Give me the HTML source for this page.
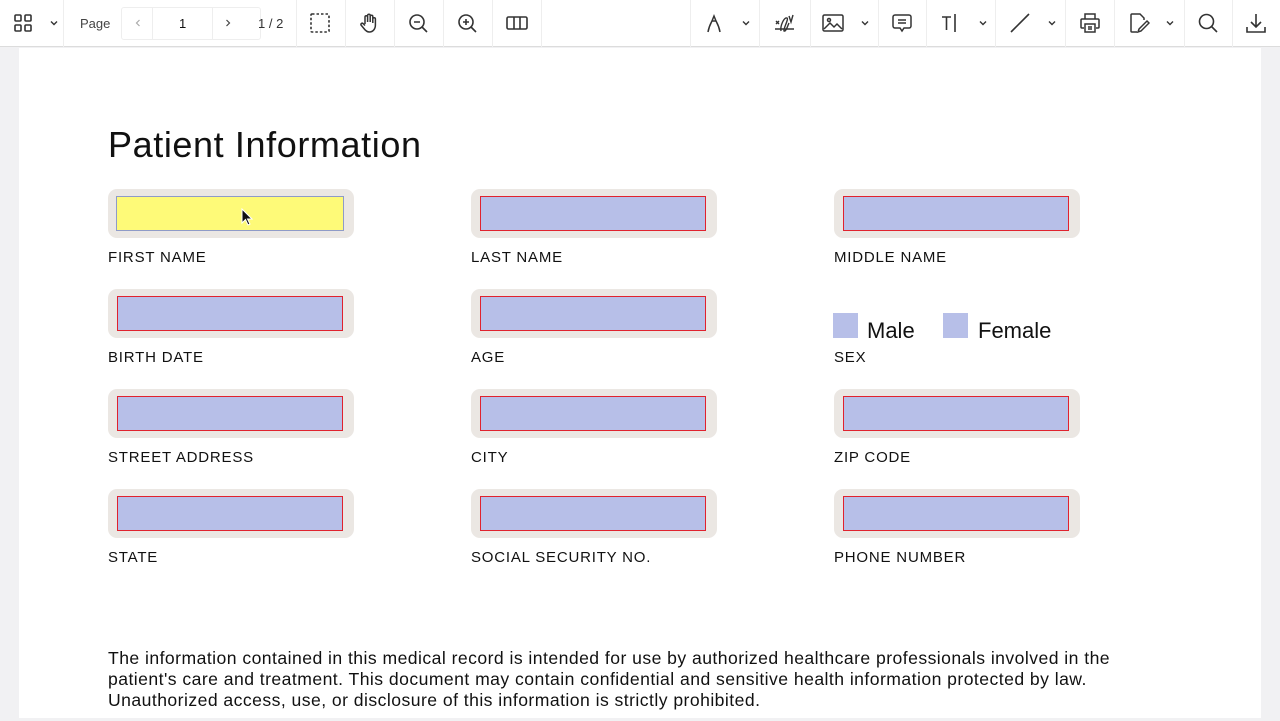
<!DOCTYPE html>
<html><head><meta charset="utf-8"><style>
*{margin:0;padding:0;box-sizing:border-box}
body{width:1280px;height:721px;overflow:hidden;background:#f1f1f3;font-family:"Liberation Sans",sans-serif;position:relative;color:#111}
.tb{position:absolute;left:0;top:0;width:1280px;height:47px;background:#fff;border-bottom:1px solid #dcdcdc}
.sep{position:absolute;top:0;width:1px;height:47px;background:#eee}
.ic{position:absolute;top:12px;width:22px;height:22px}
.ch{position:absolute;top:19px;width:8px;height:8px}
.page{position:absolute;left:19px;top:48px;width:1242px;height:670px;background:#fff}
h1{position:absolute;left:108px;top:124px;font-size:36px;font-weight:400;letter-spacing:0.6px}
.f{position:absolute;width:246px;height:49px;background:#ebe7e3;border-radius:9px}
.f i{position:absolute;left:9px;top:7px;width:226px;height:35px;background:#b7bfe8;border:1px solid #e0222e}
.l{position:absolute;font-size:15px;letter-spacing:0.8px}
.cb{position:absolute;width:25px;height:25px;background:#b7bfe8}
.t{position:absolute;font-size:22px}
p{position:absolute;left:108px;top:648px;font-size:17.6px;line-height:21px;white-space:nowrap;letter-spacing:0.45px}
</style></head><body>
<div class="tb">
<svg class="ic" style="left:12px" viewBox="0 0 22 22" fill="none" stroke="#333" stroke-width="1.6"><rect x="3" y="3" width="6" height="6" rx="1"/><rect x="13" y="3" width="6" height="6" rx="1"/><rect x="3" y="13" width="6" height="6" rx="1"/><rect x="13" y="13" width="6" height="6" rx="1"/></svg>
<svg class="ch" style="left:50px" viewBox="0 0 8 8" fill="none" stroke="#333" stroke-width="1.4"><path d="M1 2.5l3 3 3-3"/></svg>
<div class="sep" style="left:63px"></div>
<div style="position:absolute;left:80px;top:16px;font-size:13px;color:#444">Page</div>
<div style="position:absolute;left:121px;top:7px;width:140px;height:33px;border:1px solid #eee;border-radius:3px"></div>
<div class="sep" style="left:152px;top:8px;height:31px"></div><div class="sep" style="left:212px;top:8px;height:31px"></div>
<svg class="ch" style="left:134px;top:19px" viewBox="0 0 8 8" fill="none" stroke="#aaa" stroke-width="1.2"><path d="M5.5 1L2.5 4l3 3"/></svg>
<div style="position:absolute;left:179px;top:16px;font-size:13px">1</div>
<svg class="ch" style="left:224px;top:19px" viewBox="0 0 8 8" fill="none" stroke="#444" stroke-width="1.2"><path d="M2.5 1l3 3-3 3"/></svg>
<div style="position:absolute;left:258px;top:16px;font-size:13px;color:#333">1 / 2</div>
<div class="sep" style="left:296px"></div>
<svg class="ic" style="left:309px" viewBox="0 0 22 22" fill="none" stroke="#333" stroke-width="1.6" stroke-dasharray="2.5 2"><rect x="2" y="2" width="18" height="18" rx="1"/></svg>
<div class="sep" style="left:345px"></div>
<svg class="ic" style="left:358px" viewBox="0 0 22 22" fill="none" stroke="#333" stroke-width="1.5"><path d="M7 12V5a1.3 1.3 0 012.6 0v5M9.6 10V3.5a1.3 1.3 0 012.6 0V10M12.2 10V4.5a1.3 1.3 0 012.6 0V11M14.8 11V7a1.3 1.3 0 012.6 0v6c0 4-2.5 7-6 7-2.5 0-4-1.5-5.5-3.5L3 13a1.3 1.3 0 012-1.5l2 2"/></svg>
<div class="sep" style="left:394px"></div>
<svg class="ic" style="left:407px" viewBox="0 0 22 22" fill="none" stroke="#333" stroke-width="1.6"><circle cx="10" cy="10" r="7"/><path d="M15 15l5 5M7 10h6"/></svg>
<div class="sep" style="left:443px"></div>
<svg class="ic" style="left:456px" viewBox="0 0 22 22" fill="none" stroke="#333" stroke-width="1.6"><circle cx="10" cy="10" r="7"/><path d="M15 15l5 5M7 10h6M10 7v6"/></svg>
<div class="sep" style="left:492px"></div>
<svg class="ic" style="left:506px" viewBox="0 0 22 22" fill="none" stroke="#333" stroke-width="1.6"><rect x="1" y="5" width="20" height="12" rx="1.5"/><path d="M8 5v12M14 5v12"/></svg>
<div class="sep" style="left:541px"></div>

<div class="sep" style="left:690px"></div>
<svg class="ic" style="left:703px" viewBox="0 0 22 22" fill="none" stroke="#333" stroke-width="1.5"><path d="M5 20c1-6 3-9 4-11l2-5 2 5c1 2 3 5 4 11M9 9h4"/></svg>
<svg class="ch" style="left:742px" viewBox="0 0 8 8" fill="none" stroke="#333" stroke-width="1.4"><path d="M1 2.5l3 3 3-3"/></svg>
<div class="sep" style="left:759px"></div>
<svg class="ic" style="left:773px" viewBox="0 0 22 22" fill="none" stroke="#333" stroke-width="1.4"><path d="M2 17h19M3 12l3-3M3 9l3 3M8 19c-1-5 3-14 6-13 2 1-4 11-3 13 2 1 4-6 5-8M16 4l2 6 2-7"/></svg>
<div class="sep" style="left:810px"></div>
<svg class="ic" style="left:822px" viewBox="0 0 22 22" fill="none" stroke="#333" stroke-width="1.5"><rect x="1" y="3" width="20" height="16" rx="1.5"/><circle cx="7" cy="8" r="1.5"/><path d="M2 17l6-6 4 4 3-3 5 5"/></svg>
<svg class="ch" style="left:861px" viewBox="0 0 8 8" fill="none" stroke="#333" stroke-width="1.4"><path d="M1 2.5l3 3 3-3"/></svg>
<div class="sep" style="left:878px"></div>
<svg class="ic" style="left:891px" viewBox="0 0 22 22" fill="none" stroke="#333" stroke-width="1.5"><path d="M4 3h14a2 2 0 012 2v9a2 2 0 01-2 2h-5l-2 3-2-3H4a2 2 0 01-2-2V5a2 2 0 012-2zM7 8h8M7 11h8"/></svg>
<div class="sep" style="left:926px"></div>
<svg class="ic" style="left:940px" viewBox="0 0 22 22" fill="none" stroke="#333" stroke-width="1.6"><path d="M2 5h9M6.5 5v13M15 2v18"/></svg>
<svg class="ch" style="left:979px" viewBox="0 0 8 8" fill="none" stroke="#333" stroke-width="1.4"><path d="M1 2.5l3 3 3-3"/></svg>
<div class="sep" style="left:995px"></div>
<svg class="ic" style="left:1009px" viewBox="0 0 22 22" fill="none" stroke="#333" stroke-width="1.6"><path d="M2 20L20 2"/></svg>
<svg class="ch" style="left:1048px" viewBox="0 0 8 8" fill="none" stroke="#333" stroke-width="1.4"><path d="M1 2.5l3 3 3-3"/></svg>
<div class="sep" style="left:1065px"></div>
<svg class="ic" style="left:1079px" viewBox="0 0 22 22" fill="none" stroke="#333" stroke-width="1.5"><path d="M6 7V2h10v5M5 16H3a1 1 0 01-1-1V8a1 1 0 011-1h16a1 1 0 011 1v7a1 1 0 01-1 1h-2"/><rect x="6" y="12" width="10" height="8"/><path d="M9 15h4M9 17h4"/></svg>
<div class="sep" style="left:1114px"></div>
<svg class="ic" style="left:1128px" viewBox="0 0 22 22" fill="none" stroke="#333" stroke-width="1.5"><path d="M9 20H4a1 1 0 01-1-1V3a1 1 0 011-1h8l4 4v2M19 9l2 2-8 8-3 1 1-3z"/></svg>
<svg class="ch" style="left:1166px" viewBox="0 0 8 8" fill="none" stroke="#333" stroke-width="1.4"><path d="M1 2.5l3 3 3-3"/></svg>
<div class="sep" style="left:1184px"></div>
<svg class="ic" style="left:1197px" viewBox="0 0 22 22" fill="none" stroke="#333" stroke-width="1.6"><circle cx="9.5" cy="9.5" r="7"/><path d="M14.5 14.5l5.5 5.5"/></svg>
<div class="sep" style="left:1232px"></div>
<svg class="ic" style="left:1245px" viewBox="0 0 22 22" fill="none" stroke="#333" stroke-width="1.6"><path d="M11 2v13M6 10l5 5 5-5M2 15v5h18v-5"/></svg>
</div>
<div class="page"></div>
<h1>Patient Information</h1>

<div class="f" style="left:108px;top:189px"><i style="background:#fefa78;border-color:#8f9bc7;left:8px;width:228px"></i></div>
<svg style="position:absolute;left:241px;top:208px" width="12" height="18" viewBox="0 0 12 18"><path d="M1 1v14l3.5-3.5 2.5 5.5 2-1-2.5-5H11z" fill="#111" stroke="#fff" stroke-width="1"/></svg>
<div class="f" style="left:471px;top:189px"><i></i></div>
<div class="f" style="left:834px;top:189px"><i></i></div>
<div class="f" style="left:108px;top:289px"><i></i></div>
<div class="f" style="left:471px;top:289px"><i></i></div>
<div class="f" style="left:108px;top:389px"><i></i></div>
<div class="f" style="left:471px;top:389px"><i></i></div>
<div class="f" style="left:834px;top:389px"><i></i></div>
<div class="f" style="left:108px;top:489px"><i></i></div>
<div class="f" style="left:471px;top:489px"><i></i></div>
<div class="f" style="left:834px;top:489px"><i></i></div>

<div class="l" style="left:108px;top:249px">FIRST NAME</div>
<div class="l" style="left:471px;top:249px">LAST NAME</div>
<div class="l" style="left:834px;top:249px">MIDDLE NAME</div>
<div class="l" style="left:108px;top:349px">BIRTH DATE</div>
<div class="l" style="left:471px;top:349px">AGE</div>
<div class="l" style="left:834px;top:349px">SEX</div>
<div class="l" style="left:108px;top:449px">STREET ADDRESS</div>
<div class="l" style="left:471px;top:449px">CITY</div>
<div class="l" style="left:834px;top:449px">ZIP CODE</div>
<div class="l" style="left:108px;top:549px">STATE</div>
<div class="l" style="left:471px;top:549px">SOCIAL SECURITY NO.</div>
<div class="l" style="left:834px;top:549px">PHONE NUMBER</div>

<div class="cb" style="left:833px;top:313px"></div><div class="t" style="left:867px;top:318px">Male</div>
<div class="cb" style="left:943px;top:313px"></div><div class="t" style="left:978px;top:318px">Female</div>

<p>The information contained in this medical record is intended for use by authorized healthcare professionals involved in the<br>patient's care and treatment. This document may contain confidential and sensitive health information protected by law.<br>Unauthorized access, use, or disclosure of this information is strictly prohibited.</p>
</body></html>
